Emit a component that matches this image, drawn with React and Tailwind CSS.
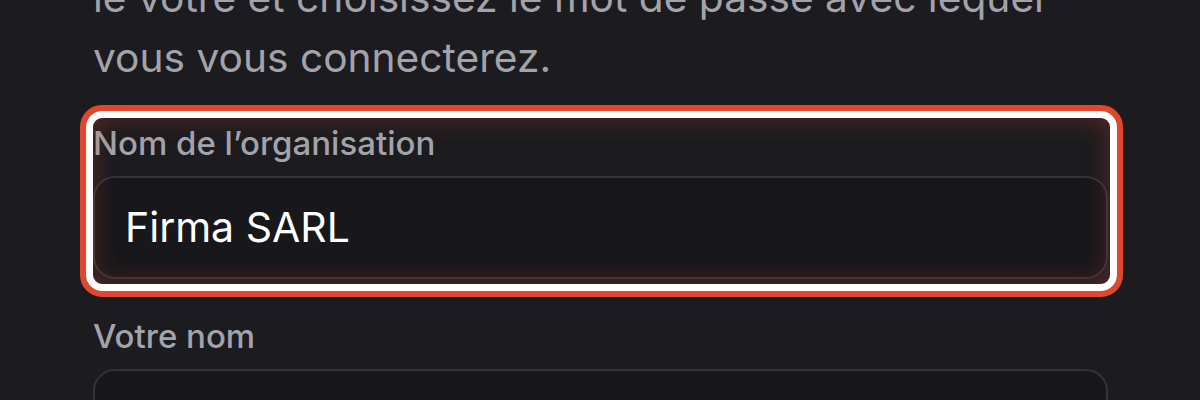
import React from 'react';

const Field = ({ label, value, highlighted }) => {
  return (
    <div className="relative">
      <label className="block text-[33px] leading-[40px] font-medium text-[#a3a3ab]">{label}</label>
      <div className="mt-[13px] h-[103px] rounded-[22px] border-2 border-[#34333a] bg-[#18171b] flex items-center px-[30px]">
        <span className="text-[41px] text-white">{value}</span>
      </div>
      {highlighted && (
        <div className="pointer-events-none absolute -left-[13px] -right-[15px] -top-[18px] -bottom-[18px] rounded-[22px] border-[6px] border-[#e1472c]">
          <div className="h-full w-full rounded-[16px] border-[7px] border-white shadow-[inset_0_0_26px_rgba(200,70,50,0.35)]" />
        </div>
      )}
    </div>
  );
};

const App = () => {
  return (
    <div
      className="h-[400px] w-[1200px] overflow-hidden bg-[#1c1b1f]"
      style={{ fontFamily: 'Inter, "Noto Sans", sans-serif' }}
    >
      <div className="ml-[93px] w-[1015px] -mt-[32px]">
        <p className="text-[40.7px] leading-[60px] text-[#a3a3ab]">
          le votre et choisissez le mot de passe avec lequel vous vous connecterez.
        </p>
        <div className="mt-[35px] flex flex-col gap-[37px]">
          <Field label="Nom de l’organisation" value="Firma SARL" highlighted />
          <Field label="Votre nom" value="" />
        </div>
      </div>
    </div>
  );
};

export default App;
